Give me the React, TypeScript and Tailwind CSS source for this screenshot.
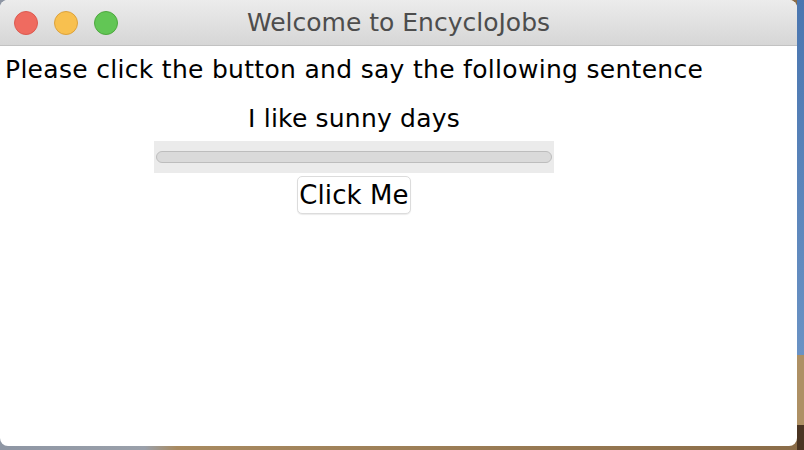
import React from 'react';

const font = { fontFamily: '"DejaVu Sans", Verdana, sans-serif' };

export default function App() {
  return (
    <div className="relative h-[450px] w-[804px] overflow-hidden bg-[linear-gradient(90deg,#8e96a4_0%,#9aa0aa_18%,#a88a60_22%,#8a6c48_100%)]" style={font}>
      {/* desktop wallpaper strip on the right */}
      <div className="absolute right-0 top-0 flex h-full w-[7px] flex-col">
        <div className="h-[355px] bg-[linear-gradient(180deg,#4a76b0,#6a92c4)]" />
        <div className="h-[70px] bg-[#ae9064]" />
        <div className="flex-1 bg-[#4a3422]" />
      </div>

      {/* window */}
      <div className="absolute left-0 top-0 flex h-[446px] w-[797px] flex-col overflow-hidden rounded-[8px] bg-white">
        <div className="relative flex h-[46px] shrink-0 items-center justify-center border-b border-[#c2c2c2] bg-[linear-gradient(180deg,#ececec,#d6d6d6)]">
          <div className="absolute left-[14px] top-[11px] flex gap-4">
            <span className="h-6 w-6 rounded-full border border-[#dc5a50] bg-[#ef6b60]" />
            <span className="h-6 w-6 rounded-full border border-[#dca23c] bg-[#f8c04f]" />
            <span className="h-6 w-6 rounded-full border border-[#4ea83f] bg-[#62c655]" />
          </div>
          <span className="text-[25px] leading-[29px] text-[#4d4d4d]">Welcome to EncycloJobs</span>
        </div>

        <div className="flex w-[708px] flex-col items-center">
          <p className="mt-[9px] w-full whitespace-nowrap px-[5px] text-[25px] leading-[29px] tracking-[0.3px] text-black">
            Please click the button and say the following sentence
          </p>
          <p className="mt-[20px] text-[25px] leading-[29px] tracking-[0.2px] text-black">I like sunny days</p>
          <div className="mt-[8px] flex h-[32px] w-[400px] items-center bg-[#ebebeb] px-[2px]">
            <div className="h-[12px] w-full rounded-full border border-[#bdbdbd] bg-[#dadada]" />
          </div>
          <button className="mt-[3px] h-[38px] rounded-[5px] border border-[#dcdcdc] bg-white px-[1px] text-[26px] leading-[30px] tracking-[0.1px] text-black shadow-[0_1px_1px_rgba(0,0,0,0.08)]">
            Click Me
          </button>
        </div>
      </div>
    </div>
  );
}
